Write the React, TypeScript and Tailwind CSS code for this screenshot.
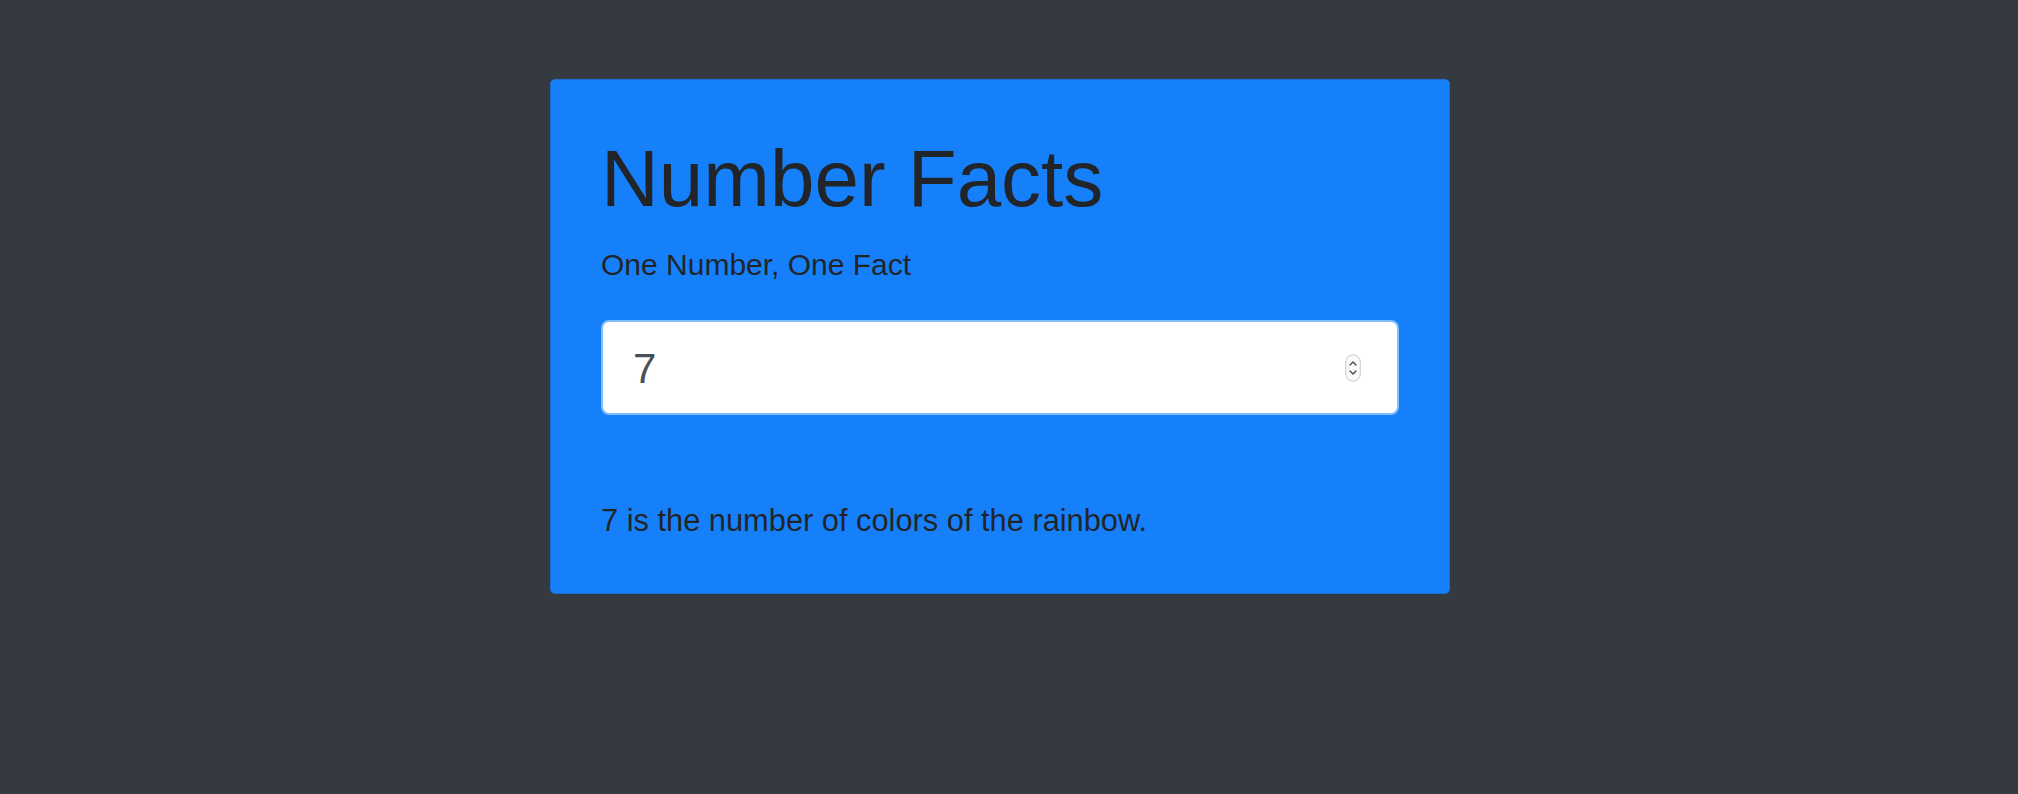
import { useState } from "react";

// Single number-fact card on a dark page.
function Stepper() {
  return (
    <svg width="16" height="28" viewBox="0 0 16 28" className="shrink-0">
      <rect x="0.75" y="0.75" width="14.5" height="26.5" rx="7.25" fill="#fafafa" stroke="#c9c9c9" strokeWidth="1" />
      <path d="M5 11 L8 8 L11 11" fill="none" stroke="#4a4a4a" strokeWidth="1.4" strokeLinecap="round" strokeLinejoin="round" />
      <path d="M5 17 L8 20 L11 17" fill="none" stroke="#4a4a4a" strokeWidth="1.4" strokeLinecap="round" strokeLinejoin="round" />
    </svg>
  );
}

export default function App() {
  const [n, setN] = useState("7");

  return (
    <div className="min-h-[794px] bg-[#343a40] pt-[79px] font-['Liberation_Sans',Arial,sans-serif]">
      <div className="ml-[550px] w-[900px] rounded-[5px] border border-[#1b70d8] bg-[#1680fb] px-[50px] pt-[59px] pb-[56px] text-[#212529]">
        <h1 className="text-[80px] leading-none font-normal">Number Facts</h1>
        <p className="mt-[31px] text-[30px] leading-none">One Number, One Fact</p>
        <div className="mt-[40px] flex h-[95px] items-center rounded-[8px] border-2 border-[#80bdff] bg-white pl-[30px] pr-[36px]">
          <input
            value={n}
            onChange={(e) => setN(e.target.value)}
            className="mt-[3px] min-w-0 flex-1 bg-transparent text-[42px] leading-none text-[#495057] outline-none"
          />
          <Stepper />
        </div>
        <p className="mt-[91px] text-[30.8px] leading-none">7 is the number of colors of the rainbow.</p>
      </div>
    </div>
  );
}
